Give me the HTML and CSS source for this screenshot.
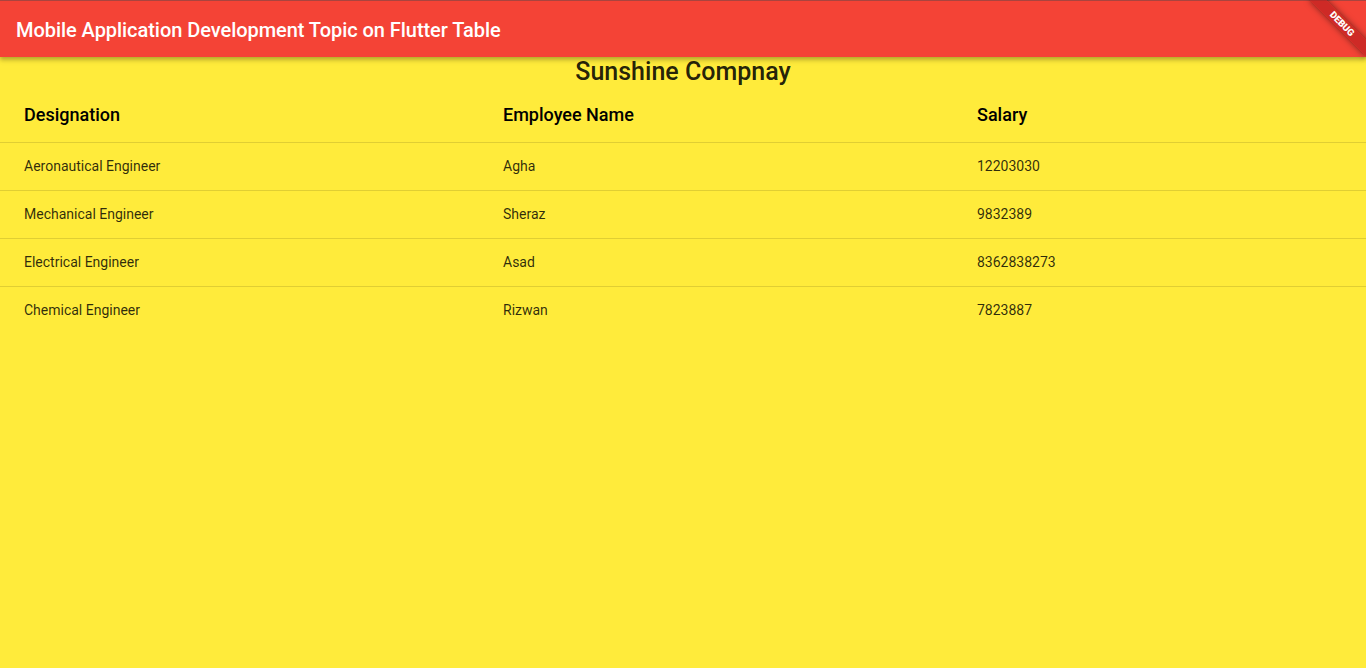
FILE: index.html
```html
<!DOCTYPE html>
<html>
<head>
<meta charset="utf-8">
<link rel="stylesheet" href="styles.css">
</head>
<body>
<header class="appbar">
  <h1 class="appbar-title">Mobile Application Development Topic on Flutter Table</h1>
</header>
<div class="debug-banner"><span>DEBUG</span></div>
<main class="content">
  <h2 class="company">Sunshine Compnay</h2>
  <div class="table">
    <div class="row head">
      <div class="cell">Designation</div>
      <div class="cell">Employee Name</div>
      <div class="cell">Salary</div>
    </div>
    <div class="row">
      <div class="cell">Aeronautical Engineer</div>
      <div class="cell">Agha</div>
      <div class="cell">12203030</div>
    </div>
    <div class="row">
      <div class="cell">Mechanical Engineer</div>
      <div class="cell">Sheraz</div>
      <div class="cell">9832389</div>
    </div>
    <div class="row">
      <div class="cell">Electrical Engineer</div>
      <div class="cell">Asad</div>
      <div class="cell">8362838273</div>
    </div>
    <div class="row last">
      <div class="cell">Chemical Engineer</div>
      <div class="cell">Rizwan</div>
      <div class="cell">7823887</div>
    </div>
  </div>
</main>
</body>
</html>
```
FILE: styles.css
```css
html, body {
  margin: 0;
  padding: 0;
  height: 100%;
}
body {
  background: #ffeb3b;
  font-family: Roboto, "Liberation Sans", sans-serif;
  overflow: hidden;
  position: relative;
}
.appbar {
  height: 56px;
  background: #f44336;
  border-top: 1px solid #a9443f;
  box-shadow: 0 2px 4px rgba(0,0,0,0.2), 0 4px 5px rgba(0,0,0,0.12);
  display: flex;
  align-items: center;
  padding-left: 16px;
  position: relative;
  z-index: 1;
}
.appbar-title {
  margin: 0;
  padding-top: 2px;
  font-size: 20px;
  font-weight: 500;
  color: #fff;
  letter-spacing: -0.05px;
}
.debug-banner {
  position: absolute;
  z-index: 2;
  left: 1302px;
  top: 18px;
  width: 80px;
  height: 12px;
  background: rgba(183, 28, 28, 0.63);
  transform: rotate(45deg);
  display: flex;
  align-items: center;
  justify-content: center;
  box-shadow: 0 0 6px rgba(0,0,0,0.5);
}
.debug-banner span {
  color: #fff;
  font-size: 9.5px;
  font-weight: 900;
  line-height: 1;
}
.content {
  display: flex;
  flex-direction: column;
}
.company {
  margin: 0;
  height: 30px;
  line-height: 30px;
  text-align: center;
  font-size: 25px;
  font-weight: 500;
  color: rgba(0,0,0,0.87);
}
.table {
  display: flex;
  flex-direction: column;
}
.row {
  box-sizing: border-box;
  display: grid;
  grid-template-columns: 479px 474px 1fr;
  padding-left: 24px;
  padding-bottom: 2px;
  height: 48px;
  align-items: center;
  border-bottom: 1px solid rgba(0,0,0,0.12);
  font-size: 14px;
  color: rgba(0,0,0,0.82);
}
.row.head {
  height: 56px;
  padding-bottom: 0;
  font-size: 18px;
  font-weight: 500;
}
.row.head .cell {
  color: #000;
}
.row.last {
  border-bottom: none;
}
.cell {
  white-space: nowrap;
}
```
